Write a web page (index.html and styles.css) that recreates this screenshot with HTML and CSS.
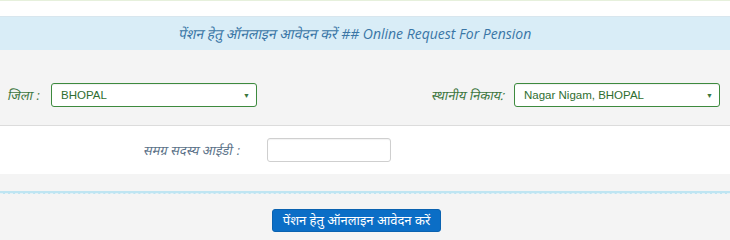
FILE: index.html
```html
<!DOCTYPE html>
<html lang="hi">
<head>
<meta charset="utf-8">
<title>पेंशन हेतु ऑनलाइन आवेदन</title>
<link rel="stylesheet" href="styles.css">
</head>
<body>
<div class="page">
  <div class="topline"></div>
  <div class="spacer"></div>
  <div class="heading"><span class="dev">पेंशन हेतु ऑनलाइन आवेदन करें</span> ## Online Request For Pension</div>
  <div class="row row-select">
    <div class="col col-left">
      <span class="lbl lbl-green"><span class="dev">जिला</span> :</span>
      <div class="select"><span>BHOPAL</span><span class="caret">▼</span></div>
    </div>
    <div class="col col-right">
      <span class="lbl lbl-green"><span class="dev">स्थानीय निकाय:</span></span>
      <div class="select"><span>Nagar Nigam, BHOPAL</span><span class="caret">▼</span></div>
    </div>
  </div>
  <div class="row row-id">
    <span class="lbl lbl-blue id-lbl"><span class="dev">समग्र सदस्य आईडी</span> :</span>
    <div class="textbox"></div>
  </div>
  <div class="gap"></div>
  <div class="sep"></div>
  <div class="actions">
    <button class="btn">पेंशन हेतु ऑनलाइन आवेदन करें</button>
  </div>
</div>
</body>
</html>
```

FILE: styles.css
```css
html, body {
  margin: 0;
  padding: 0;
  background: #f4f4f4;
}
.page {
  width: 730px;
  height: 240px;
  overflow: hidden;
  font-family: "Liberation Sans", Arial, sans-serif;
}
.topline {
  height: 1px;
  background: #e6f0dc;
}
.spacer {
  height: 15px;
  background: #fff;
  border-bottom: 1px solid #d8e6ee;
}
.dev {
  display: inline-block;
  transform: skewX(-12deg);
}
.heading {
  height: 33px;
  line-height: 34px;
  background: #d9edf7;
  color: #3a76a6;
  text-align: center;
  font-family: "Open Sans", "Noto Sans", sans-serif;
  font-style: italic;
  font-size: 14px;
  padding-right: 20px;
}
.row-select {
  display: grid;
  grid-template-columns: 365px 365px;
  height: 76px;
  box-sizing: border-box;
  padding-top: 33px;
  background: #f4f4f4;
  border-bottom: 1px solid #dcdcdc;
}
.col {
  display: flex;
  align-items: center;
  height: 24px;
}
.col-left {
  padding-left: 8px;
}
.col-left .lbl {
  width: 43px;
}
.col-right {
  justify-content: flex-end;
  padding-right: 10px;
}
.col-right .lbl {
  margin-right: 9px;
}
.lbl {
  font-style: italic;
  font-size: 13px;
  font-family: "Open Sans", "Noto Sans", sans-serif;
}
.lbl-green {
  color: #3c763d;
}
.lbl-blue {
  color: #5b7288;
}
.select {
  width: 206px;
  height: 24px;
  box-sizing: border-box;
  border: 1px solid #3d8a3e;
  border-radius: 3px;
  background: #fff;
  display: flex;
  align-items: center;
  justify-content: space-between;
  padding: 0 6px 0 9px;
  color: #2f6e30;
  font-size: 11.5px;
  box-shadow: inset 0 1px 1px rgba(0,0,0,0.06);
}
.caret {
  font-size: 7px;
  color: #3c763d;
}
.row-id {
  display: flex;
  align-items: center;
  height: 48px;
  background: #fff;
}
.id-lbl {
  width: 240px;
  text-align: right;
  margin-right: 27px;
}
.textbox {
  width: 124px;
  height: 24px;
  box-sizing: border-box;
  border: 1px solid #cfcfcf;
  border-radius: 3px;
  background: #fff;
  box-shadow: inset 0 1px 1px rgba(0,0,0,0.05);
}
.gap {
  height: 17px;
  background: #f4f4f4;
}
.sep {
  height: 2px;
  background: #bfe5f2;
  border-bottom: 1px dashed #e6f2f6;
}
.actions {
  display: flex;
  justify-content: center;
  padding-top: 15px;
  padding-right: 17px;
}
.btn {
  width: 169px;
  height: 23px;
  border: 1px solid #0a62b0;
  border-radius: 3px;
  background: #0b6ec6;
  color: #fff;
  font-family: "Open Sans", "Noto Sans", sans-serif;
  font-size: 13px;
  padding: 0;
  line-height: 21px;
}
```
